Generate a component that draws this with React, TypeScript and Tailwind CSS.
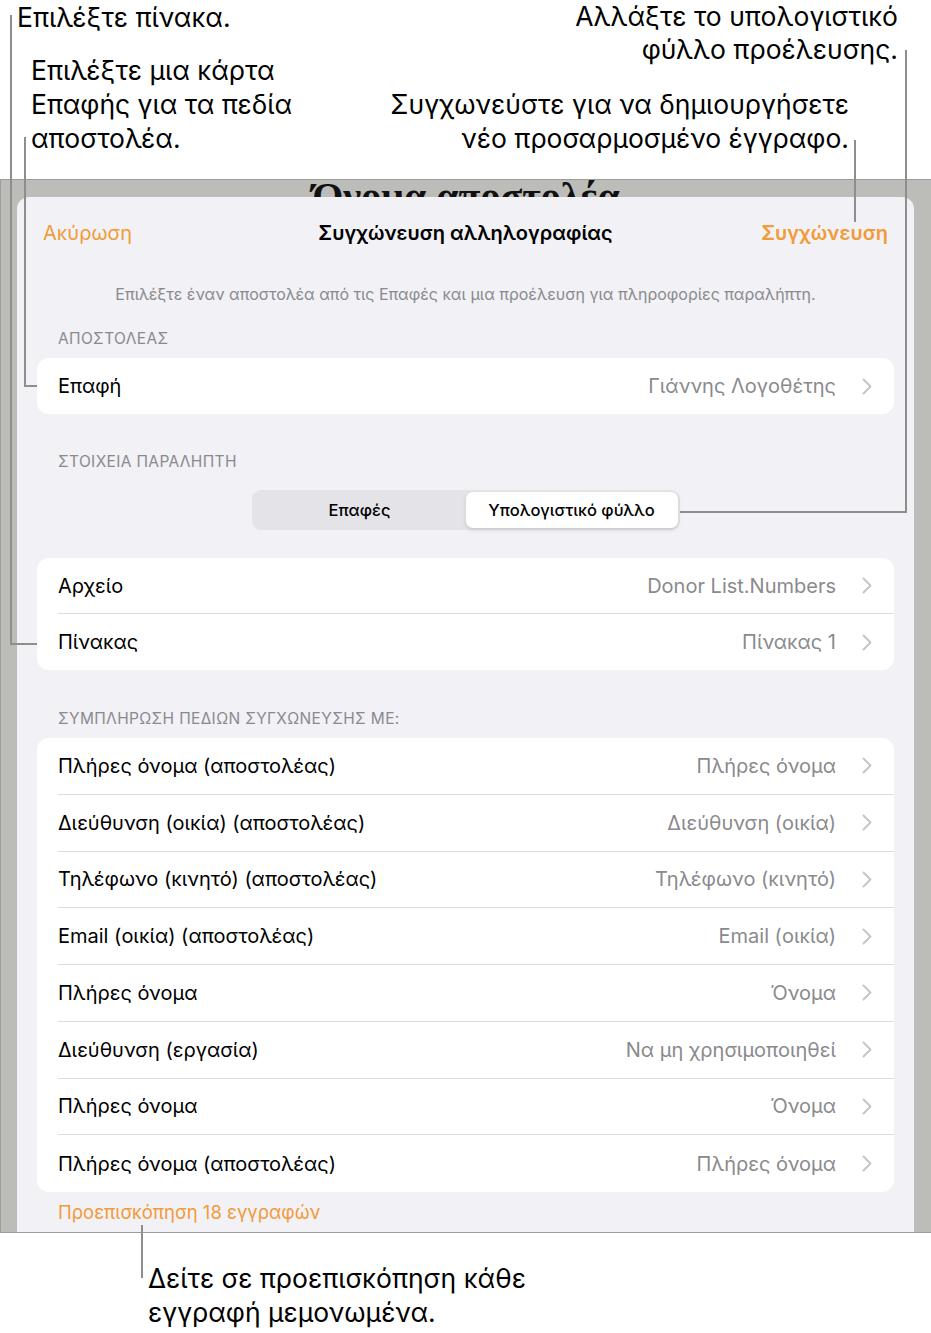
import React from 'react'

const fieldRows: [string, string][] = [
  ['Πλήρες όνομα (αποστολέας)', 'Πλήρες όνομα'],
  ['Διεύθυνση (οικία) (αποστολέας)', 'Διεύθυνση (οικία)'],
  ['Τηλέφωνο (κινητό) (αποστολέας)', 'Τηλέφωνο (κινητό)'],
  ['Email (οικία) (αποστολέας)', 'Email (οικία)'],
  ['Πλήρες όνομα', 'Όνομα'],
  ['Διεύθυνση (εργασία)', 'Να μη χρησιμοποιηθεί'],
  ['Πλήρες όνομα', 'Όνομα'],
  ['Πλήρες όνομα (αποστολέας)', 'Πλήρες όνομα'],
]

function Chevron() {
  return (
    <svg width="10" height="17" viewBox="0 0 10 17" className="shrink-0">
      <polyline points="1.5,1.5 8.5,8.5 1.5,15.5" fill="none" stroke="#c4c4c8" strokeWidth="1.8" strokeLinecap="round" strokeLinejoin="round" />
    </svg>
  )
}

function Row({ label, value, last, h = 'h-[56px]' }: { label: string; value: string; last?: boolean; h?: string }) {
  return (
    <div className={`flex items-center pl-[21px] ${h}`}>
      <div className={`flex-1 h-full flex items-center pr-[22px] ${last ? '' : 'border-b border-[#dcdce0]'}`}>
        <span className="flex-1 text-[20px] text-black">{label}</span>
        <span className="text-[20px] text-[#8a8a8e] mr-[26px]">{value}</span>
        <Chevron />
      </div>
    </div>
  )
}

function SectionTitle({ children, className = '' }: { children: React.ReactNode; className?: string }) {
  return <div className={`pl-[41px] text-[15.5px] leading-[20px] text-[#8a8a8e] tracking-[0.35px] ${className}`}>{children}</div>
}

export default function App() {
  return (
    <div className="relative w-[931px] h-[1333px] bg-white overflow-hidden font-['Inter',sans-serif]">
      {/* callouts above */}
      <div className="h-[179px] flex justify-between text-[26.5px] leading-[34px] text-black">
        <div className="pl-[17px]">
          <div>Επιλέξτε πίνακα.</div>
          <div className="mt-[19px] ml-[14px]">
            Επιλέξτε μια κάρτα
            <br />
            Επαφής για τα πεδία
            <br />
            αποστολέα.
          </div>
        </div>
        <div className="pr-[33px] flex flex-col items-end text-right">
          <div className="leading-[33px]">
            Αλλάξτε το υπολογιστικό
            <br />
            φύλλο προέλευσης.
          </div>
          <div className="mt-[21px] mr-[49px]">
            Συγχωνεύστε για να δημιουργήσετε
            <br />
            νέο προσαρμοσμένο έγγραφο.
          </div>
        </div>
      </div>

      {/* device frame */}
      <div className="h-[1054px] bg-[#bcbdb9] border-y border-l border-[#9c9d9a] flex flex-col overflow-hidden">
        <div className="h-[17px] overflow-hidden text-center">
          <div className="mt-[-3px] font-['Liberation_Serif',serif] font-bold text-[40px] leading-[40px] text-[#111]">Όνομα αποστολέα</div>
        </div>

        <div className="flex-1 ml-[16px] mr-[17px] bg-[#f1f1f6] rounded-t-[12px]">
          <div className="h-[72px] grid grid-cols-[1fr_auto_1fr] items-center px-[26px]">
            <span className="text-[20px] text-[#f29b38]">Ακύρωση</span>
            <span className="text-[20px] font-semibold text-black">Συγχώνευση αλληλογραφίας</span>
            <span className="text-[20px] font-semibold text-[#f29b38] text-right">Συγχώνευση</span>
          </div>

          <div className="mt-[15px] text-center text-[16px] leading-[20px] text-[#8a8a8e]">
            Επιλέξτε έναν αποστολέα από τις Επαφές και μια προέλευση για πληροφορίες παραλήπτη.
          </div>

          <SectionTitle className="mt-[25px]">ΑΠΟΣΤΟΛΕΑΣ</SectionTitle>
          <div className="mt-[9px] mx-[20px] bg-white rounded-[12px]">
            <Row label="Επαφή" value="Γιάννης Λογοθέτης" last />
          </div>

          <SectionTitle className="mt-[38px]">ΣΤΟΙΧΕΙΑ ΠΑΡΑΛΗΠΤΗ</SectionTitle>
          <div className="mt-[18px] flex justify-center">
            <div className="w-[428px] h-[40px] bg-[#e3e3e8] rounded-[9px] p-[2px] grid grid-cols-2 text-[16.5px] font-medium text-black">
              <div className="flex items-center justify-center">Επαφές</div>
              <div className="flex items-center justify-center bg-white rounded-[7px] shadow-[0_2px_4px_rgba(0,0,0,0.12)]">Υπολογιστικό φύλλο</div>
            </div>
          </div>

          <div className="mt-[28px] mx-[20px] bg-white rounded-[12px]">
            <Row label="Αρχείο" value="Donor List.Numbers" />
            <Row label="Πίνακας" value="Πίνακας 1" last />
          </div>

          <SectionTitle className="mt-[39px]">ΣΥΜΠΛΗΡΩΣΗ ΠΕΔΙΩΝ ΣΥΓΧΩΝΕΥΣΗΣ ΜΕ:</SectionTitle>
          <div className="mt-[9px] mx-[20px] bg-white rounded-[12px]">
            {fieldRows.map(([l, v], i) => (
              <Row key={i} label={l} value={v} h="h-[56.75px]" last={i === fieldRows.length - 1} />
            ))}
          </div>

          <div className="mt-[10px] pl-[41px] text-[18.5px] leading-[20px] text-[#f29b38]">Προεπισκόπηση 18 εγγραφών</div>
        </div>
      </div>

      {/* callout below */}
      <div className="mt-[28px] pl-[148px] text-[26.5px] leading-[34px] text-black">
        Δείτε σε προεπισκόπηση κάθε
        <br />
        εγγραφή μεμονωμένα.
      </div>

      {/* leader lines */}
      <svg className="absolute inset-0 pointer-events-none" width="931" height="1333">
        <g fill="none" stroke="#8e8e8e" strokeWidth="2">
          <path d="M11 15 V644 H37" />
          <path d="M25 137 V386 H37" />
          <path d="M855 140 V222" />
          <path d="M906 50 V512 H680" />
          <path d="M142 1225 V1278" />
        </g>
      </svg>
    </div>
  )
}
